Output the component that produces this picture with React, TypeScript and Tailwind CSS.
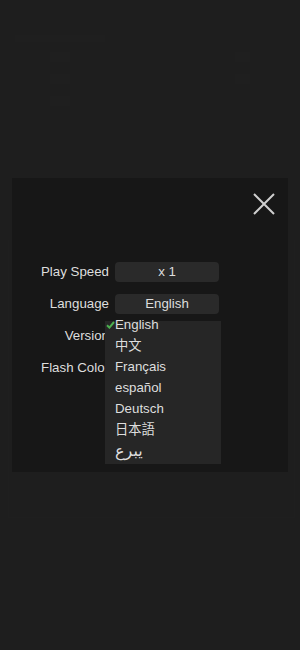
import React from "react";

const langs = ["English", "中文", "Français", "español", "Deutsch", "日本語"];

function Row({ label, value }: { label: string; value?: string }) {
  return (
    <div className="flex h-[32px] items-center gap-[6px]">
      <div className="w-[97px] text-right text-[13.3px] text-[#dedede] whitespace-nowrap">{label}</div>
      {value !== undefined ? (
        <div className="flex h-[20px] w-[104px] items-center justify-center rounded-[4px] bg-[#2a2a2a] text-[13.3px] text-[#dedede]">
          {value}
        </div>
      ) : (
        <div className="h-[20px] w-[104px]" />
      )}
    </div>
  );
}

export default function App() {
  return (
    <div
      className="relative h-[650px] w-[300px] overflow-hidden bg-[#1e1e1e]"
      style={{ fontFamily: '"Liberation Sans", Arial, "Noto Sans CJK SC", "DejaVu Sans", sans-serif' }}
    >
      {/* faint background content */}
      <div className="flex flex-col px-[15px] pt-[35px]">
        <div className="h-[7px] w-[90px] bg-[#1f1f1f]" />
        <div className="mt-[10px] flex justify-between px-[35px]">
          <div className="flex flex-col gap-[12px]">
            <div className="h-[10px] w-[20px] bg-[#1f1f1f]" />
            <div className="h-[10px] w-[20px] bg-[#1f1f1f]" />
            <div className="h-[10px] w-[20px] bg-[#1f1f1f]" />
          </div>
          <div className="flex flex-col gap-[12px]">
            <div className="h-[10px] w-[15px] bg-[#1f1f1f]" />
            <div className="h-[10px] w-[15px] bg-[#1f1f1f]" />
          </div>
        </div>
      </div>
      <div className="absolute left-[8px] top-[240px] h-[278px] w-[287px] border-x border-b border-[#1f1f1f]" />

      {/* modal */}
      <div className="absolute left-[12px] top-[178px] h-[294px] w-[276px] bg-[#171717]">
        <div className="flex justify-end pr-[13px] pt-[15px]">
          <svg width="22" height="22" viewBox="0 0 22 22">
            <path d="M1 1 L21 21 M21 1 L1 21" stroke="#cfcfcf" strokeWidth="2" strokeLinecap="butt" />
          </svg>
        </div>
        <div className="mt-[41px] flex flex-col">
          <Row label="Play Speed" value="x 1" />
          <Row label="Language" value="English" />
          <Row label="Version" />
          <Row label="Flash Color" />
        </div>

        {/* dropdown */}
        <div className="absolute left-[93px] top-[143px] h-[143px] w-[116px] bg-[#262626]">
          <div className="-mt-[7px] flex flex-col">
            {langs.map((l, i) => (
              <div key={l} className="relative flex h-[21px] items-center pl-[10px] text-[13.3px] text-[#dedede]">
                {i === 0 && (
                  <svg className="absolute left-[1px] top-[7px]" width="9" height="8" viewBox="0 0 9 8">
                    <path d="M1 4.2 L3.4 6.6 L8 1" stroke="#4caf50" strokeWidth="2" fill="none" />
                  </svg>
                )}
                {l}
              </div>
            ))}
            <div className="flex h-[22px] items-center pl-[10px] text-[16px] text-[#dedede]">
              <bdo dir="ltr" style={{ fontFamily: '"DejaVu Sans", sans-serif' }}>عربي</bdo>
            </div>
          </div>
        </div>
      </div>
    </div>
  );
}
